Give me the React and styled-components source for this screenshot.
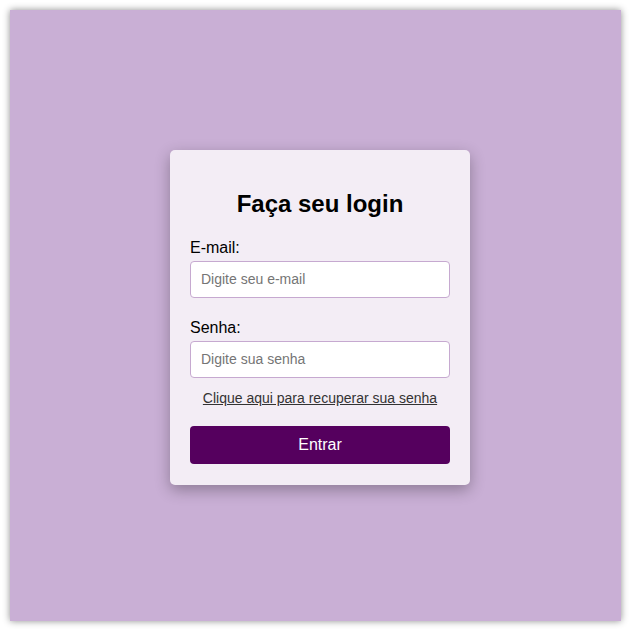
import React from "react";
import styled, { createGlobalStyle } from "styled-components";

const GlobalStyle = createGlobalStyle`
  html, body {
    margin: 0;
    padding: 0;
    background: #ffffff;
    font-family: "Liberation Sans", Arial, sans-serif;
  }
  * { box-sizing: border-box; }
`;

const Page = styled.main`
  margin: 10px;
  width: 611px;
  height: 611px;
  background: #c9afd5;
  box-shadow: 0 0 7px rgba(0, 0, 0, 0.45);
  display: flex;
  align-items: center;
  justify-content: center;
`;

const Card = styled.form`
  width: 300px;
  margin: 3px 0 0 9px;
  padding: 20px 20px 21px;
  background: #f3edf5;
  border-radius: 5px;
  box-shadow: 0 5px 15px rgba(0, 0, 0, 0.3);
  display: flex;
  flex-direction: column;
`;

const Title = styled.h2`
  margin: 20px 0 20px;
  font-size: 24px;
  line-height: 28px;
  font-weight: 700;
  text-align: center;
  color: #000;
`;

const Field = styled.div`
  display: flex;
  flex-direction: column;
  gap: 4px;
  margin-bottom: ${(p) => p.$space}px;
`;

const Label = styled.label`
  font-size: 16px;
  line-height: 19px;
  color: #000;
`;

const Input = styled.input`
  height: 37px;
  width: 100%;
  padding: 0 10px;
  border: 1px solid #c6a9d0;
  border-radius: 4px;
  background: #fff;
  font-family: "Liberation Sans", Arial, sans-serif;
  font-size: 14px;
  outline: none;

  &::placeholder {
    color: #757575;
  }
`;

const Recover = styled.a`
  align-self: center;
  font-size: 14px;
  line-height: 18px;
  color: #333;
  text-decoration: underline;
  margin-bottom: 19px;
`;

const Button = styled.button`
  height: 38px;
  border: none;
  border-radius: 4px;
  background: #55005e;
  color: #fff;
  font-family: "Liberation Sans", Arial, sans-serif;
  font-size: 16px;
`;

export default function App() {
  return (
    <>
      <GlobalStyle />
      <Page>
        <Card onSubmit={(e) => e.preventDefault()}>
          <Title>Faça seu login</Title>
          <Field $space={20}>
            <Label>E-mail:</Label>
            <Input type="email" placeholder="Digite seu e-mail" />
          </Field>
          <Field $space={11}>
            <Label>Senha:</Label>
            <Input type="password" placeholder="Digite sua senha" />
          </Field>
          <Recover href="#">Clique aqui para recuperar sua senha</Recover>
          <Button type="submit">Entrar</Button>
        </Card>
      </Page>
    </>
  );
}
